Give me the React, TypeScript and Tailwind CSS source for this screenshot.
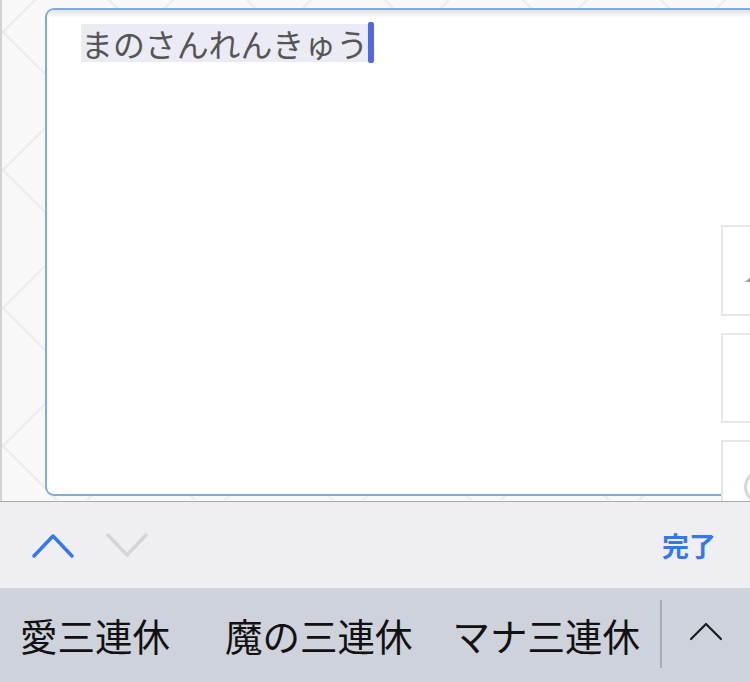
import React from "react";

const jp = { fontFamily: '"Noto Sans CJK JP", "Noto Sans", sans-serif' };

function Pattern() {
  const lines: React.ReactNode[] = [];
  for (let k = -6; k < 10; k++) {
    const c1 = 167 + 138 * k;
    lines.push(<line key={"a" + k} x1={0} y1={c1} x2={800} y2={c1 + 800} />);
    const c2 = 173 + 138 * k;
    lines.push(<line key={"b" + k} x1={0} y1={c2} x2={800} y2={c2 - 800} />);
  }
  return (
    <svg className="absolute inset-0" width="750" height="500" viewBox="0 0 750 500">
      <g stroke="#ececec" strokeWidth="2" fill="none">
        {lines}
      </g>
    </svg>
  );
}

export default function App() {
  return (
    <div className="w-[750px] h-[682px] overflow-hidden flex flex-col bg-[#f8f8f8]" style={jp}>
      <div className="relative h-[501px] shrink-0 overflow-hidden">
        <Pattern />
        <div className="absolute left-0 top-0 h-full w-[2px] bg-[#d2d2d2]" />
        <div className="relative pt-[8px] pl-[45px] h-full">
          <div className="relative h-[488px] w-[740px] rounded-[9px] border-2 border-[#7eabdd] bg-white overflow-hidden">
            <div className="absolute left-0 right-0 top-0 h-[8px] bg-gradient-to-b from-[#e2e2e2] to-white" />
            <div className="relative pl-[34px] pt-[12px] flex items-start">
              <span className="mt-[2px] bg-[#ebebf5] text-[#555555] text-[31.9px] leading-[38px]">まのさんれんきゅう</span>
              <span className="w-[6px] h-[41px] rounded-[2px] bg-[#4f68e6]" />
            </div>
          </div>
        </div>
        <div className="absolute left-[721px] top-[225px] w-[40px] h-[91px] border-2 border-[#e6e6e6] bg-white">
          <div className="absolute left-[22px] top-[48px] w-0 h-0 border-l-[8px] border-l-transparent border-b-[7px] border-b-[#9a9a9a]" />
        </div>
        <div className="absolute left-[721px] top-[333px] w-[40px] h-[90px] border-2 border-[#e6e6e6] bg-white" />
        <div className="absolute left-[721px] top-[440px] w-[40px] h-[90px] border-2 border-[#e6e6e6] bg-white">
          <div className="absolute left-[21px] top-[28px] w-[34px] h-[34px] rounded-full border-[3px] border-[#d6d6d6]" />
        </div>
      </div>

      <div className="h-[87px] shrink-0 border-t border-[#a9a9a9] bg-[#efeff1] flex items-center relative">
        <svg className="absolute left-[31px] top-[30px]" width="46" height="28" viewBox="0 0 46 28">
          <polyline points="3,24 22,4 41,24" fill="none" stroke="#3378f2" strokeWidth="3.5" strokeLinecap="round" strokeLinejoin="round" />
        </svg>
        <svg className="absolute left-[105px] top-[30px]" width="46" height="28" viewBox="0 0 46 28">
          <polyline points="3,3 22,23 41,3" fill="none" stroke="#d5d5d7" strokeWidth="3.5" strokeLinecap="round" strokeLinejoin="round" />
        </svg>
        <span className="ml-auto mr-[34px] text-[27px] font-bold text-[#3478ee] leading-none">完了</span>
      </div>

      <div className="flex-1 bg-[#ced2db] flex items-center relative">
        <span className="ml-[20px] text-[37.5px] text-[#111] leading-none">愛三連休</span>
        <span className="ml-[55px] text-[37.5px] text-[#111] leading-none">魔の三連休</span>
        <span className="ml-[40px] text-[37.5px] text-[#111] leading-none">マナ三連休</span>
        <div className="absolute left-[660px] top-[12px] w-[2px] h-[68px] bg-[#a7abb3]" />
        <svg className="absolute left-[688px] top-[33px]" width="36" height="22" viewBox="0 0 36 22">
          <polyline points="3,18 18,3 33,18" fill="none" stroke="#1c1c1c" strokeWidth="2.2" strokeLinecap="round" strokeLinejoin="round" />
        </svg>
      </div>
    </div>
  );
}
